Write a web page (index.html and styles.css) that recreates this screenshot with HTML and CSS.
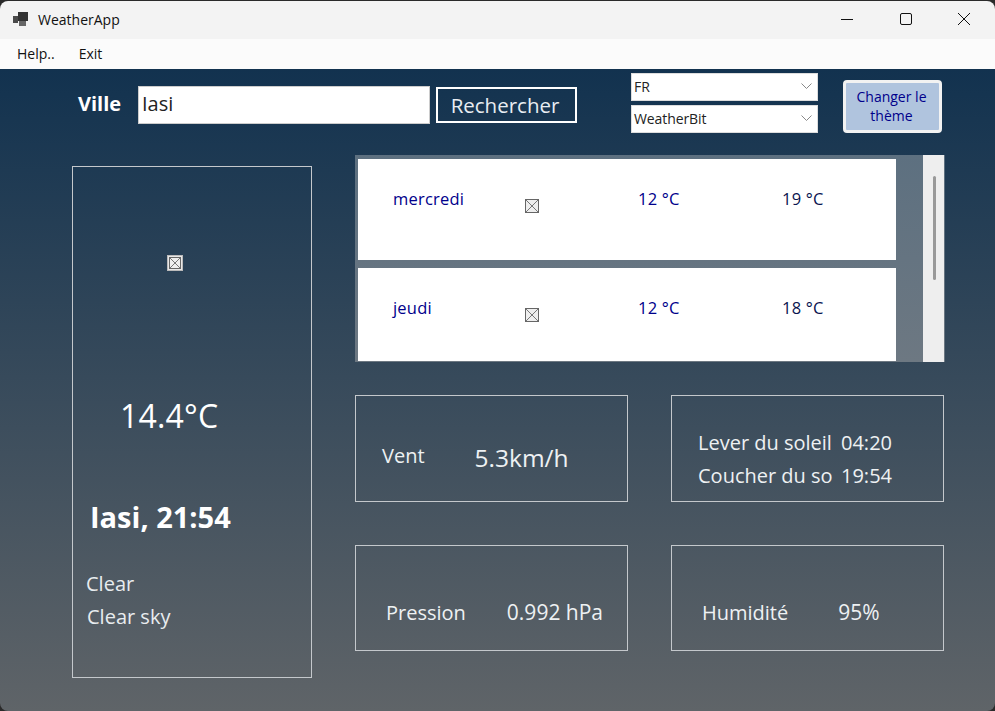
FILE: index.html
```html
<!DOCTYPE html>
<html lang="fr">
<head>
    <meta charset="UTF-8">
    <meta name="viewport" content="width=device-width, initial-scale=1.0">
    <title>WeatherApp</title>
    <link rel="stylesheet" href="styles.css">
</head>
<body>

    <div class="window">
        <div class="titlebar">
            <svg class="app-icon" width="16" height="16" viewBox="0 0 16 16">
                <rect x="0" y="5" width="5" height="7" fill="#4a4a4a"/>
                <rect x="5" y="1" width="10" height="9" fill="#333"/>
                <rect x="6" y="10" width="7" height="5" fill="#666"/>
            </svg>
            <span class="app-name">WeatherApp</span>
            <div class="controls">
                <svg width="12" height="12" viewBox="0 0 12 12"><path d="M0 6.5H12" stroke="#111" stroke-width="1"/></svg>
                <svg width="12" height="12" viewBox="0 0 12 12"><rect x="0.5" y="0.5" width="11" height="11" rx="1.5" fill="none" stroke="#111"/></svg>
                <svg width="12" height="12" viewBox="0 0 12 12"><path d="M0 0L12 12M12 0L0 12" stroke="#111" stroke-width="1"/></svg>
            </div>
        </div>

        <div class="menubar">
            <span>Help..</span>
            <span>Exit</span>
        </div>

        <div class="form">
            <div class="toolbar">
                <label class="city-label">Ville</label>
                <div class="city-input">Iasi</div>
                <div class="search-btn">Rechercher</div>
                <div class="selects">
                    <div class="select"><span>FR</span><svg width="11" height="6" viewBox="0 0 11 6"><path d="M0.5 0.5L5.5 5.5L10.5 0.5" fill="none" stroke="#888"/></svg></div>
                    <div class="select"><span>WeatherBit</span><svg width="11" height="6" viewBox="0 0 11 6"><path d="M0.5 0.5L5.5 5.5L10.5 0.5" fill="none" stroke="#888"/></svg></div>
                </div>
                <div class="theme-btn">Changer le thème</div>
            </div>

            <div class="content">
                <div class="today">
                    <svg class="broken light" width="16" height="16" viewBox="0 0 16 16">
                        <rect x="0.5" y="0.5" width="15" height="15" fill="#e8e8e8" stroke="#bbb"/>
                        <rect x="2.5" y="2.5" width="11" height="11" fill="#eee" stroke="#666"/>
                        <path d="M3 3L13 13M13 3L3 13" stroke="#777"/>
                    </svg>
                    <div class="temp">14.4°C</div>
                    <div class="place">Iasi, 21:54</div>
                    <div class="cond">Clear</div>
                    <div class="cond detail">Clear sky</div>
                </div>

                <div class="side">
                    <div class="forecast">
                        <div class="days">
                            <div class="day">
                                <span class="day-name">mercredi</span>
                                <svg class="broken" width="14" height="14" viewBox="0 0 14 14">
                                    <rect x="0.5" y="0.5" width="13" height="13" fill="#eee" stroke="#666"/>
                                    <path d="M1 1L13 13M13 1L1 13" stroke="#777"/>
                                </svg>
                                <span class="low">12 °C</span>
                                <span class="high">19 °C</span>
                            </div>
                            <div class="day short">
                                <span class="day-name">jeudi</span>
                                <svg class="broken" width="14" height="14" viewBox="0 0 14 14">
                                    <rect x="0.5" y="0.5" width="13" height="13" fill="#eee" stroke="#666"/>
                                    <path d="M1 1L13 13M13 1L1 13" stroke="#777"/>
                                </svg>
                                <span class="low">12 °C</span>
                                <span class="high">18 °C</span>
                            </div>
                        </div>
                        <div class="scrollbar"><div class="thumb"></div></div>
                    </div>

                    <div class="stats">
                        <div class="stat wind">
                            <span class="stat-label">Vent</span>
                            <span class="wind-value">5.3km/h</span>
                        </div>
                        <div class="stat sun">
                            <div class="sun-row"><span class="sun-label">Lever du soleil</span><span>04:20</span></div>
                            <div class="sun-row"><span class="sun-label">Coucher du so</span><span>19:54</span></div>
                        </div>
                        <div class="stat pressure">
                            <span>Pression</span>
                            <span class="stat-value">0.992 hPa</span>
                        </div>
                        <div class="stat humidity">
                            <span>Humidité</span>
                            <span class="stat-value">95%</span>
                        </div>
                    </div>
                </div>
            </div>
        </div>
    </div>

</body>
</html>
```

FILE: styles.css
```css
* {
    box-sizing: border-box;
}
body {
    margin: 0;
    width: 995px;
    height: 711px;
    overflow: hidden;
    background: #2a2a2a;
    font-family: "Open Sans", "Noto Sans", sans-serif;
}
.window {
    height: 710px;
    margin-top: 1px;
    border-radius: 8px;
    overflow: hidden;
    display: flex;
    flex-direction: column;
}

/* title bar */
.titlebar {
    height: 38px;
    background: #f3f3f3;
    display: flex;
    align-items: center;
    padding: 0 0 2px 13px;
    flex: none;
}
.app-name {
    margin-left: 9px;
    font-size: 14px;
    color: #111;
}
.controls {
    margin-left: auto;
    display: flex;
    gap: 46px;
    padding-right: 25px;
}
.controls svg:first-child {
    margin-right: 1px;
}

.menubar {
    height: 30px;
    background: #fbfbfb;
    display: flex;
    gap: 24px;
    align-items: center;
    padding: 0 0 2px 17px;
    font-size: 14px;
    color: #111;
    flex: none;
}

/* form */
.form {
    flex: 1;
    background: linear-gradient(#12324f, #5f6468);
    padding: 4px 50px 0 72px;
    color: #fff;
}
.toolbar {
    display: flex;
    align-items: center;
    height: 60px;
}
.city-label {
    margin-left: 6px;
    width: 60px;
    font-size: 20px;
    font-weight: 700;
}
.city-input {
    width: 292px;
    height: 38px;
    margin-top: 4px;
    background: #fff;
    border: 1px solid #ccc;
    color: #222;
    font-size: 20px;
    line-height: 34px;
    padding-left: 3px;
}
.search-btn {
    margin: 4px 0 0 6px;
    width: 141px;
    height: 36px;
    border: 2px solid #fff;
    font-size: 20.5px;
    line-height: 33px;
    text-align: center;
    padding-right: 3px;
    color: #e8edf2;
}
.selects {
    margin-left: 54px;
    width: 187px;
    display: flex;
    flex-direction: column;
    gap: 4px;
}
.select {
    height: 28px;
    background: #fff;
    border: 1px solid #ddd;
    display: flex;
    align-items: center;
    justify-content: space-between;
    padding: 0 5px 2px 2px;
    font-size: 14px;
    letter-spacing: -0.1px;
    color: #222;
}
.theme-btn {
    margin-left: 25px;
    width: 99px;
    height: 53px;
    margin-top: 7px;
    background: #b0c4de;
    border: 3px solid #f2f2f2;
    border-radius: 4px;
    color: #00008b;
    font-size: 14px;
    line-height: 19px;
    text-align: center;
    padding: 4px 6px 0 4px;
}

.content {
    display: grid;
    grid-template-columns: 240px 590px;
    column-gap: 43px;
    margin-top: 22px;
}

/* left panel */
.today {
    margin-top: 11px;
    height: 512px;
    border: 1px solid #c4c8cc;
    display: flex;
    flex-direction: column;
    padding-left: 13px;
}
.broken {
    display: block;
}
.broken.light {
    margin: 88px 0 0 81px;
}
.temp {
    margin: 124px 0 0 34px;
    font-size: 32px;
    line-height: 42px;
    letter-spacing: 0.2px;
}
.place {
    margin: 62px 0 0 4px;
    font-size: 29px;
    line-height: 36px;
    font-weight: 700;
}
.cond {
    margin-top: 34px;
    font-size: 20px;
    line-height: 30px;
    color: #e8ecef;
}
.cond.detail {
    margin: 3px 0 0 1px;
}

/* forecast list */
.forecast {
    height: 207px;
    display: flex;
    background: linear-gradient(#5d7080, #6d7882);
    padding: 4px 1px 0 3px;
    overflow: hidden;
}
.days {
    width: 538px;
    display: flex;
    flex-direction: column;
    gap: 8px;
}
.day {
    flex: none;
    height: 101px;
    background: #fff;
    display: grid;
    grid-template-columns: 132px 113px 144px auto;
    padding: 27px 0 0 35px;
    font-size: 16.5px;
    line-height: 26px;
    letter-spacing: 0.2px;
    align-items: start;
}
.day.short {
    height: 93px;
}
.day .broken {
    margin-top: 13px;
}
.day-name, .low {
    color: #00008b;
}
.high {
    color: #0a1450;
}
.scrollbar {
    margin-left: 27px;
    width: 21px;
    margin-top: -4px;
    height: 207px;
    background: #eeeeee;
    padding: 21px 0 0 10px;
}
.thumb {
    width: 3px;
    height: 104px;
    background: #999;
    border-radius: 2px;
}

/* stat boxes */
.stats {
    margin-top: 33px;
    display: grid;
    grid-template-columns: 273px 273px;
    grid-template-rows: 107px 106px;
    column-gap: 43px;
    row-gap: 43px;
    width: 589px;
}
.stat {
    border: 1px solid #c4c8cc;
    font-size: 20px;
    color: #eef1f3;
}
.wind {
    display: flex;
    align-items: center;
    padding: 14px 0 0 26px;
}
.wind-value {
    margin: 3px 0 0 50px;
    font-size: 24.5px;
}
.sun {
    padding: 30px 0 0 26px;
    line-height: 33px;
}
.sun-row {
    display: flex;
}
.sun-label {
    width: 143px;
    overflow: hidden;
    white-space: nowrap;
}
.pressure, .humidity {
    display: flex;
    align-items: center;
    padding: 28px 0 0 30px;
}
.stat-value {
    font-size: 21px;
}
.pressure {
    gap: 41px;
}
.humidity {
    gap: 50px;
}
```
